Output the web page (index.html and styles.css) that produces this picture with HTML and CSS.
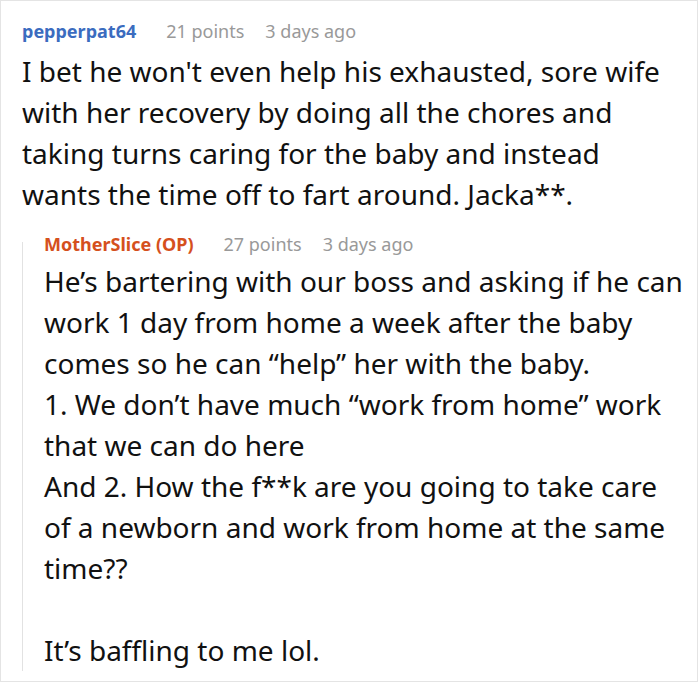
FILE: index.html
```html
<!DOCTYPE html>
<html>
<head>
<meta charset="utf-8">
<link rel="stylesheet" href="styles.css">
</head>
<body>
<div class="frame">
  <div class="comment">
    <div class="meta">
      <span class="author">pepperpat64</span>
      <span class="info">21 points</span>
      <span class="info">3 days ago</span>
    </div>
    <div class="body top-body">I bet he won't even help his exhausted, sore wife with her recovery by doing all the chores and taking turns caring for the baby and instead wants the time off to fart around. Jacka**.</div>
    <div class="reply">
      <div class="meta">
        <span class="author op">MotherSlice (OP)</span>
        <span class="info">27 points</span>
        <span class="info">3 days ago</span>
      </div>
      <div class="body">He’s bartering with our boss and asking if he can work 1 day from home a week after the baby comes so he can “help” her with the baby.<br>1. We don’t have much “work from home” work that we can do here<br>And 2. How the f**k are you going to take care of a newborn and work from home at the same time??<br><br>It’s baffling to me lol.</div>
    </div>
  </div>
</div>
</body>
</html>
```
FILE: styles.css
```css
html, body {
  margin: 0;
  padding: 0;
  background: #fff;
}
.frame {
  width: 696px;
  height: 680px;
  border: 1px solid #e4e4e4;
  box-sizing: content-box;
  font-family: "Noto Sans", sans-serif;
  color: #111;
  overflow: hidden;
}
.comment {
  padding: 18px 8px 0 21px;
}
.meta {
  display: flex;
  gap: 30px;
  font-size: 18px;
  line-height: 24px;
}
.author {
  font-weight: bold;
  color: #3b6cbf;
}
.author.op {
  color: #d5501d;
}
.info {
  color: #999;
}
.meta .info + .info {
  margin-left: -9px;
}
.body {
  font-size: 28px;
  line-height: 41px;
  margin-top: 8px;
}
.top-body {
  margin-right: 24px;
}
.reply {
  position: relative;
  margin-top: 17px;
  padding-left: 22px;
}
.reply::before {
  content: "";
  position: absolute;
  left: 0;
  top: 10px;
  bottom: 0;
  border-left: 1px solid #e2e2e2;
}
.reply .body {
  margin-top: 5px;
}
```
